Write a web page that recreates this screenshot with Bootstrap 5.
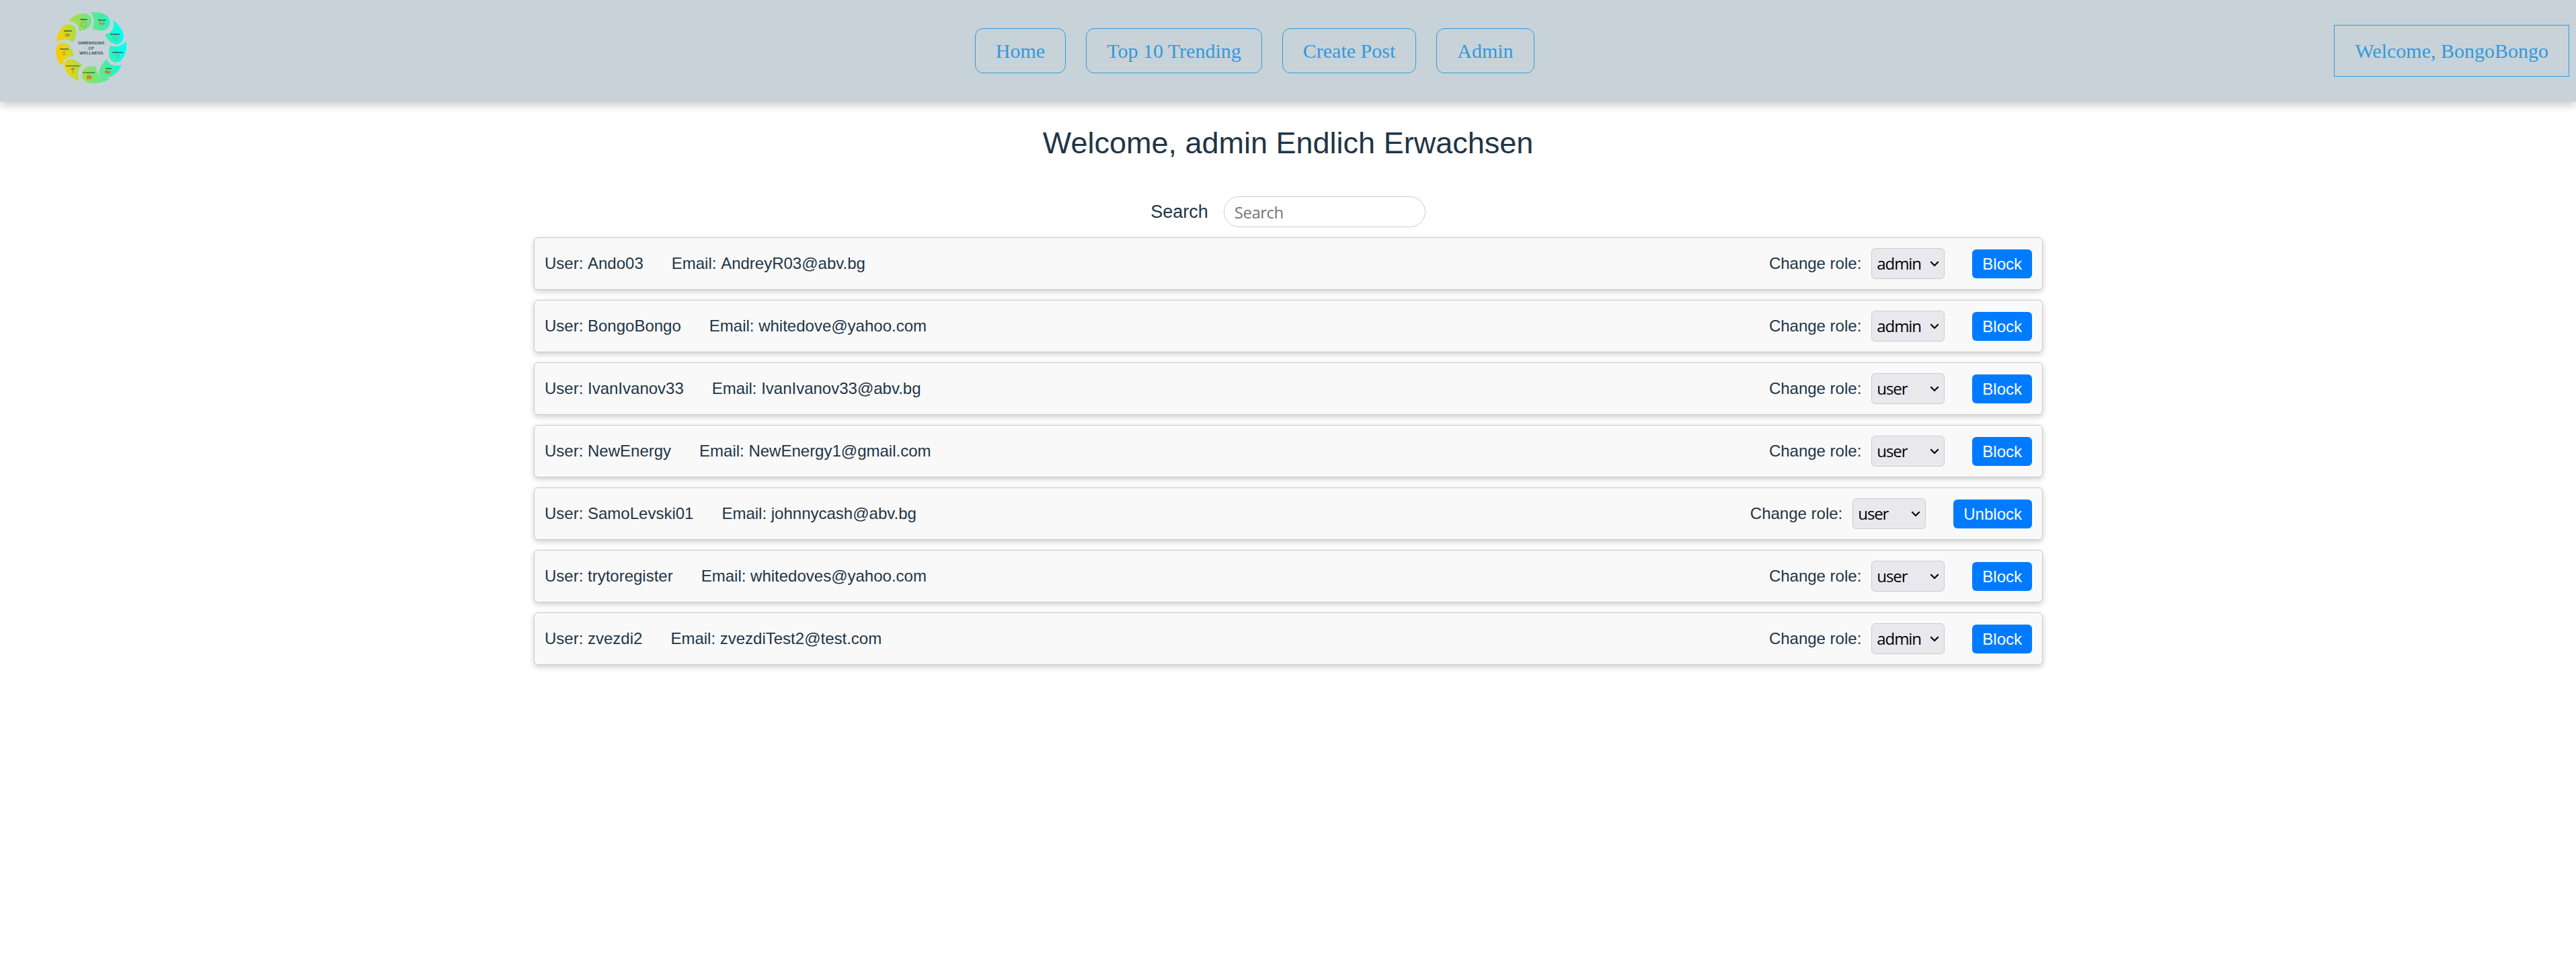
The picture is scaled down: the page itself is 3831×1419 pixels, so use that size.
<!DOCTYPE html>
<html lang="en">
<head>
<meta charset="utf-8">
<meta name="viewport" content="width=device-width, initial-scale=1">
<title>Dimensions of Wellness - Admin</title>
<link rel="stylesheet" href="https://cdn.jsdelivr.net/npm/bootstrap@5.3.0/dist/css/bootstrap.min.css">
<style>
body{font-family:"Liberation Sans",Arial,sans-serif;font-size:24px;line-height:1.5;color:#213547;background:#fff}
.site-header{height:151px;background:#c7d3d9;box-shadow:0 6px 12px rgba(0,0,0,.2);font-family:"Liberation Serif","Times New Roman",serif;font-size:30px;line-height:35px;padding:0 10px 0 60px}
.logo{width:150px;height:140px}
.logo text{font-family:"DejaVu Sans",sans-serif}
.main-links{gap:30px;padding-left:50px}
.site-header a{color:#3498db;border:1px solid #3498db;text-decoration:none;white-space:nowrap;padding:15px 30px}
.main-links a{border-radius:12px}
.site-header .account{padding:20px 30px}
.title{font-size:45px;font-weight:400;line-height:54px;margin:35px 0 52px}
.search-row{gap:23px;font-size:27px;line-height:46px;margin-bottom:15px}
.search-row .form-control{width:300px;height:46px;border:1px solid #ccc;border-radius:23px;padding:0 15px;font:24px "Open Sans",sans-serif;letter-spacing:-.5px}
.form-control::placeholder{color:#757575}
.user-list{width:2244px;gap:15px;margin:0 0 40px 1px}
.user-card{height:78px;background:#f9f9f9;border:1px solid #ccc;border-radius:6px;box-shadow:0 3px 8px rgba(0,0,0,.2);padding:0 15px}
.who{gap:42px}
.role-select{width:109px;height:46px;border:1px solid #ccc;border-radius:6px;padding:0 0 0 7px;margin:0 41px 0 15px;font:24px/44px "Open Sans",sans-serif;letter-spacing:-1.1px;color:#000;background:#e9e9ed url("data:image/svg+xml,%3Csvg xmlns='http://www.w3.org/2000/svg' viewBox='0 0 14 9'%3E%3Cpath d='M1.3 1.3 7 7l5.700-5.700' fill='none' stroke='%23000' stroke-width='2.200'/%3E%3C/svg%3E") no-repeat right 7px center/14px 9px}
.btn-block-user{--bs-btn-color:#fff;--bs-btn-bg:#007bff;--bs-btn-hover-bg:#0069d9;--bs-btn-hover-color:#fff;border:0;border-radius:6px;height:43px;padding:0 15px;font-size:24px;line-height:43px}
</style>
<script src="https://cdn.jsdelivr.net/npm/bootstrap@5.3.0/dist/js/bootstrap.bundle.min.js"></script>
</head>
<body>
<header class="site-header d-flex justify-content-between">
  <svg class="logo flex-shrink-0" viewBox="0 0 450 420" role="img" aria-label="Dimensions of Wellness">
    <defs><linearGradient id="wheel" gradientUnits="userSpaceOnUse" x1="70" y1="240" x2="384" y2="190">
      <stop offset="0" stop-color="#ffc800"/><stop offset=".1" stop-color="#efd30c"/><stop offset=".25" stop-color="#b9dc38"/><stop offset=".48" stop-color="#7be578"/><stop offset=".7" stop-color="#46eba8"/><stop offset=".84" stop-color="#18f8d8"/><stop offset="1" stop-color="#00ffff"/>
    </linearGradient></defs>
    <g fill="url(#wheel)">
      <path d="M125 93Q152 61 190 59Q225 60 229 90Q228 132 172 139Q174 99 125 93Z"/>
      <path d="M225 53Q286 51 306 81Q319 106 299 127Q280 145 232 128Q247 91 225 53Z"/>
      <path d="M325 91Q367 121 372 161Q369 196 337 198Q304 193 288 153Q335 145 325 91Z"/>
      <path d="M384 184Q389 250 353 275Q327 285 311 265Q301 244 311 204Q354 218 384 184Z"/>
      <path d="M362 291Q341 340 295 348Q263 348 261 320Q264 291 298 263Q305 300 362 291Z"/>
      <path d="M310 352Q273 374 229 372Q190 367 184 338Q184 309 209 298Q225 294 250 297Q244 345 310 352Z"/>
      <path d="M174 362Q121 344 108 302Q103 271 129 264Q154 261 188 291Q158 315 174 362Z"/>
      <path d="M95 295Q66 264 70 216Q78 190 108 191Q137 198 150 250Q107 250 95 295Z"/>
      <path d="M72 188Q77 126 116 109Q149 106 159 129Q164 156 146 190Q113 163 72 188Z"/>
    </g>
    <g fill="none" stroke="#c58a2c" stroke-width="3">
      <circle cx="193" cy="109" r="12"/>
      <path d="M263 105h22M267 98v14M281 98v14M263 101v8M285 101v8" stroke-width="4"/>
      <path d="M336 183l-13-12q-2-9 6-9l7 5 7-5q9 0 6 9zM328 168l8 8 8-6" stroke-width="2"/>
      <path d="M341 258v-5q-7-9 3-12q11 3 4 12v5zM333 246h3M352 246h3" stroke-width="2"/>
      <path d="M101 229l3 4q-12 13 2 13q14-1 2-13l3-5zM106 237v6" stroke-width="2.500"/>
    </g>
    <g fill="#c9852a">
      <path d="M288 315h14v12h-14zM300 318l13-2v12l-13 1z"/>
      <path d="M207 338h6v-4h10v4h6v15h-22zM215 338h6v-2h-6z"/>
      <path d="M143 327l1-14q-8 0-8-6l7-4q8-5 11 4q-1 6-7 6l-1 14z"/>
      <path d="M108 158q2-8 8-7l5-5 6 5q6 0 7 8q-6 5-13 5t-13-6z" opacity=".8"/>
    </g>
    <g fill="#20342f" font-size="9" font-weight="700" text-anchor="middle">
      <text x="193" y="91" textLength="33">Cultural</text><text x="275" y="93" textLength="34">Physical</text>
      <text x="334" y="157" textLength="41">Emotional</text><text x="345" y="236" textLength="48">Intellectual</text>
      <text x="304" y="310" textLength="26">Social</text><text x="217" y="327" textLength="54" lengthAdjust="spacingAndGlyphs">Occupational</text>
      <text x="144" y="297" textLength="60" lengthAdjust="spacingAndGlyphs">Environmental</text><text x="106" y="221" textLength="38">Financial</text>
      <text x="122" y="142" textLength="36">Spiritual</text>
    </g>
    <g fill="#303b4d" stroke="#303b4d" stroke-width=".4" font-size="17" text-anchor="middle">
      <text x="227" y="199" textLength="118" lengthAdjust="spacingAndGlyphs">DIMENSIONS</text>
      <text x="227" y="221" textLength="25">OF</text>
      <text x="227" y="243" textLength="106" lengthAdjust="spacingAndGlyphs">WELLNESS</text>
    </g>
  </svg>
  <nav class="main-links d-flex align-items-center">
    <a href="#">Home</a><a href="#">Top 10 Trending</a><a href="#">Create Post</a><a href="#">Admin</a>
  </nav>
  <a class="account align-self-center" href="#">Welcome, BongoBongo</a>
</header>
<main class="d-flex flex-column align-items-center">
  <h1 class="title">Welcome, admin Endlich Erwachsen</h1>
  <div class="search-row d-flex align-items-center">
    <label for="search">Search</label>
    <input id="search" class="form-control" type="text" placeholder="Search">
  </div>
  <div class="user-list d-flex flex-column">
    <div class="user-card d-flex align-items-center justify-content-between"><div class="who d-flex"><span>User: <span class="d-inline-block">Ando03</span></span><span>Email: <span class="d-inline-block">AndreyR03@abv.bg</span></span></div><div class="d-flex align-items-center"><span>Change role:</span><select class="form-select role-select" aria-label="Role"><option selected>admin</option><option>user</option></select><button class="btn btn-block-user">Block</button></div></div>
    <div class="user-card d-flex align-items-center justify-content-between"><div class="who d-flex"><span>User: BongoBongo</span><span>Email: whitedove@yahoo.com</span></div><div class="d-flex align-items-center"><span>Change role:</span><select class="form-select role-select" aria-label="Role"><option selected>admin</option><option>user</option></select><button class="btn btn-block-user">Block</button></div></div>
    <div class="user-card d-flex align-items-center justify-content-between"><div class="who d-flex"><span>User: IvanIvanov33</span><span>Email: IvanIvanov33@abv.bg</span></div><div class="d-flex align-items-center"><span>Change role:</span><select class="form-select role-select" aria-label="Role"><option>admin</option><option selected>user</option></select><button class="btn btn-block-user">Block</button></div></div>
    <div class="user-card d-flex align-items-center justify-content-between"><div class="who d-flex"><span>User: NewEnergy</span><span>Email: NewEnergy1@gmail.com</span></div><div class="d-flex align-items-center"><span>Change role:</span><select class="form-select role-select" aria-label="Role"><option>admin</option><option selected>user</option></select><button class="btn btn-block-user">Block</button></div></div>
    <div class="user-card d-flex align-items-center justify-content-between"><div class="who d-flex"><span>User: SamoLevski01</span><span>Email: johnnycash@abv.bg</span></div><div class="d-flex align-items-center"><span>Change role:</span><select class="form-select role-select" aria-label="Role"><option>admin</option><option selected>user</option></select><button class="btn btn-block-user">Unblock</button></div></div>
    <div class="user-card d-flex align-items-center justify-content-between"><div class="who d-flex"><span>User: trytoregister</span><span>Email: whitedoves@yahoo.com</span></div><div class="d-flex align-items-center"><span>Change role:</span><select class="form-select role-select" aria-label="Role"><option>admin</option><option selected>user</option></select><button class="btn btn-block-user">Block</button></div></div>
    <div class="user-card d-flex align-items-center justify-content-between"><div class="who d-flex"><span>User: zvezdi2</span><span>Email: zvezdiTest2@test.com</span></div><div class="d-flex align-items-center"><span>Change role:</span><select class="form-select role-select" aria-label="Role"><option selected>admin</option><option>user</option></select><button class="btn btn-block-user">Block</button></div></div>
  </div>
</main>
</body>
</html>
